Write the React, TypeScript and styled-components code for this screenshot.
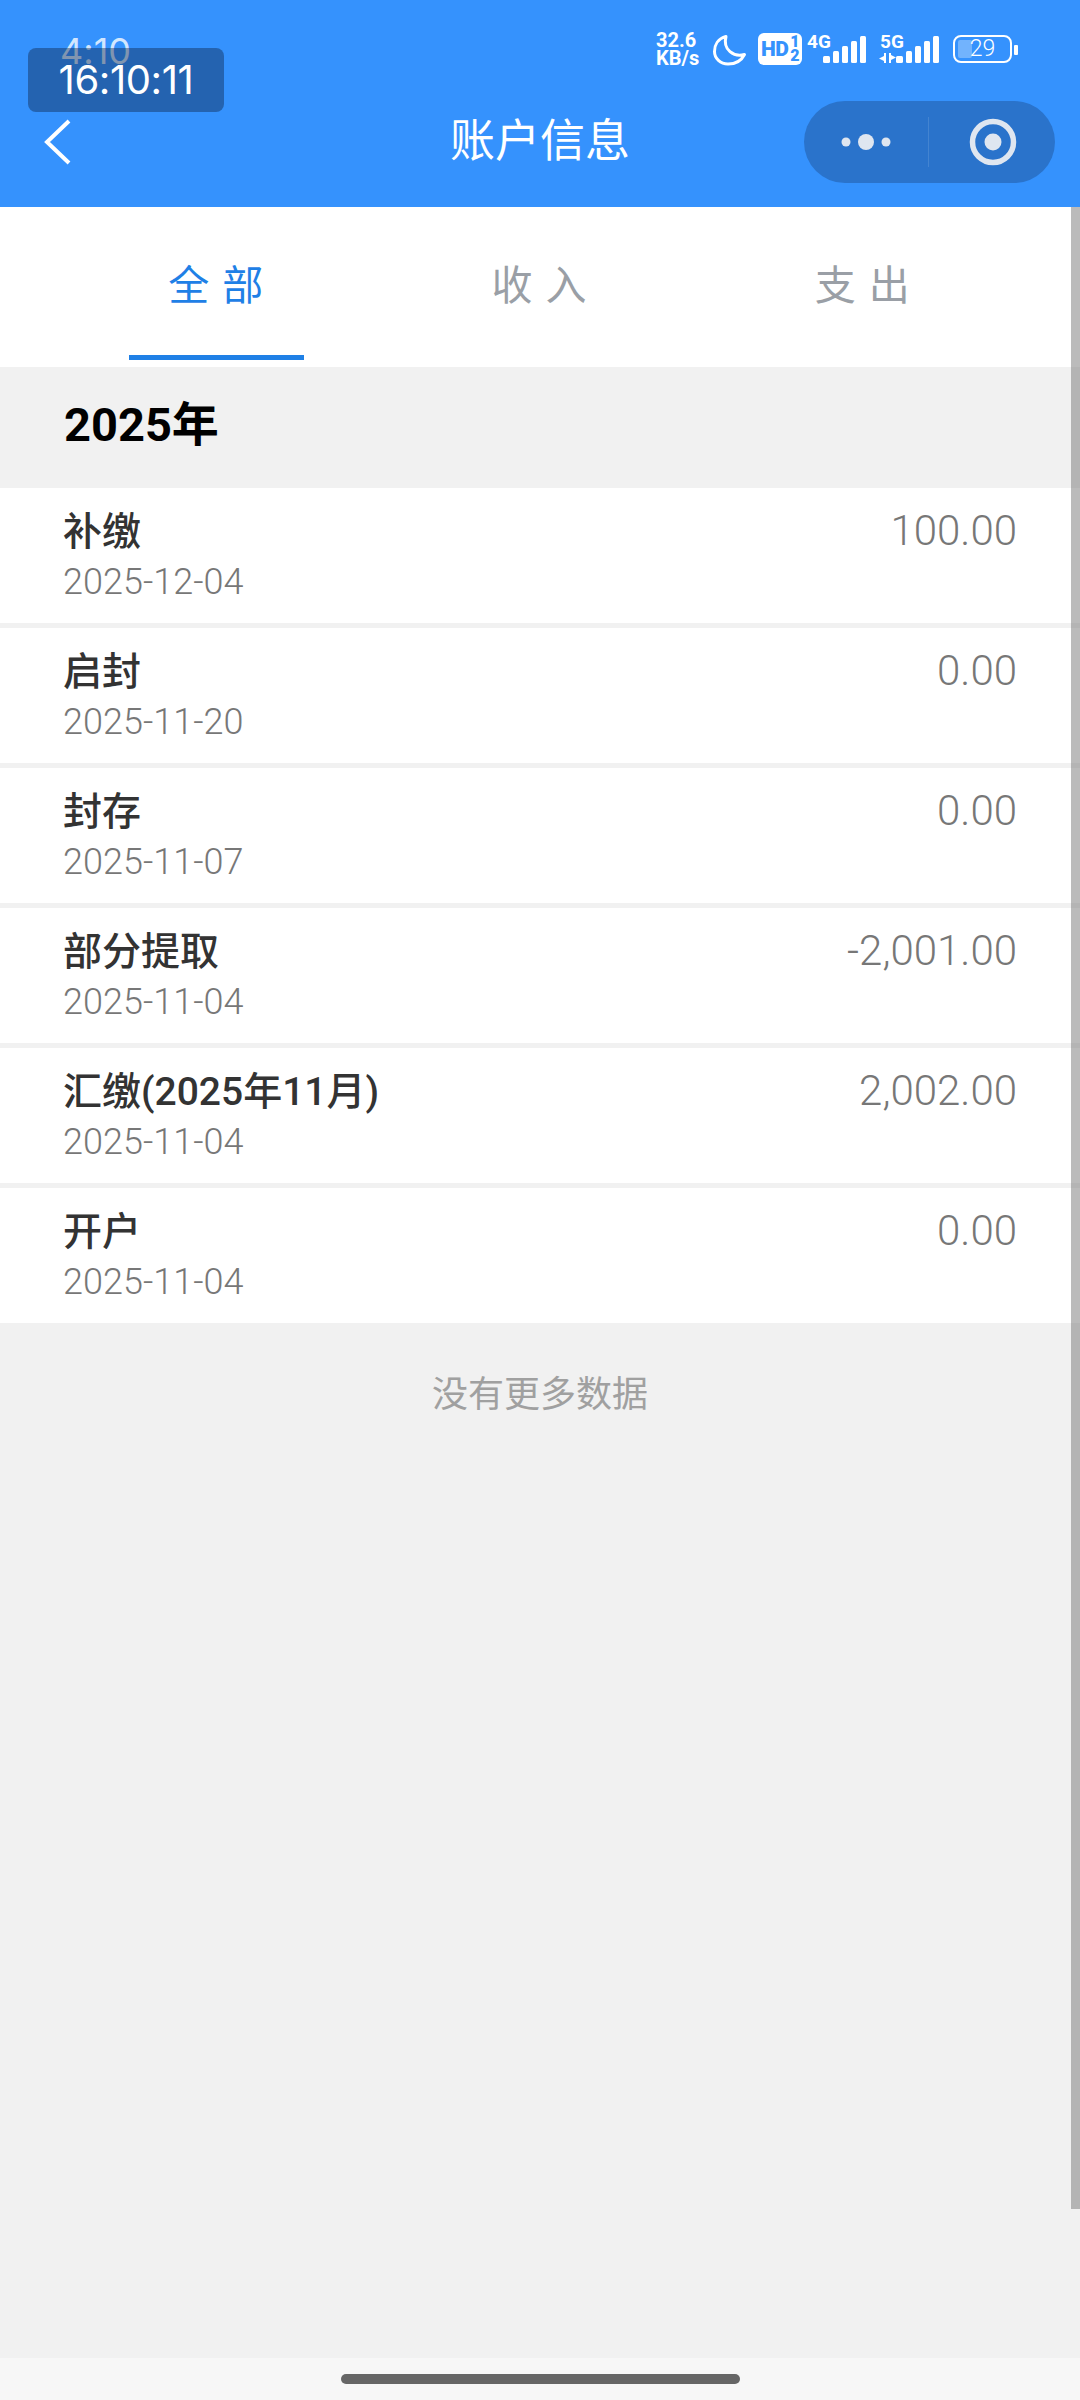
import React from "react";
import styled, { createGlobalStyle } from "styled-components";

const Global = createGlobalStyle`
  html, body { margin: 0; padding: 0; background: #f1f1f1; }
  * { box-sizing: border-box; }
  body { font-family: "Roboto", "Noto Sans CJK SC", sans-serif; }
`;

const Page = styled.div`
  position: relative;
  width: 1080px;
  height: 2400px;
  display: flex;
  flex-direction: column;
  overflow: hidden;
  background: #f1f1f1;
`;

const Header = styled.header`
  height: 207px;
  background: #3592fd;
  display: flex;
  flex-direction: column;
  flex: none;
`;

const StatusBar = styled.div`
  height: 101px;
  padding: 30px 0 0 656px;
  display: flex;
  align-items: flex-start;
  color: #fff;
`;

const Speed = styled.div`
  width: 50px;
  font-size: 20px;
  font-weight: 700;
  line-height: 18px;
  margin-top: 1px;
  white-space: nowrap;
`;

const StatusIcon = styled.svg`
  display: block;
  flex: none;
  overflow: visible;
`;

const MoonSlot = styled.div`
  margin: 5px 0 0 7px;
  width: 33px;
`;

const HdBadge = styled.div`
  margin: 3px 0 0 12px;
  width: 44px;
  height: 32px;
  border-radius: 6px;
  background: #fff;
  color: #3592fd;
  display: flex;
  align-items: center;
  padding-left: 3px;
  font-size: 21px;
  font-weight: 900;
  letter-spacing: -0.6px;
`;

const HdFraction = styled.span`
  display: flex;
  flex-direction: column;
  font-size: 16px;
  line-height: 14px;
  font-weight: 900;
  letter-spacing: 0;
  margin-left: 2px;
`;

const Signal = styled.div<{ $gap: number }>`
  position: relative;
  margin: 3px 0 0 ${(p) => p.$gap}px;
  width: 60px;
  height: 33px;
`;

const NetLabel = styled.span`
  position: absolute;
  left: 1px;
  top: -1px;
  font-size: 19px;
  font-weight: 700;
  line-height: 20px;
`;

const SignalBars = styled.svg`
  position: absolute;
  right: 0;
  top: 3px;
`;

const Arrows = styled.svg`
  position: absolute;
  left: 0;
  top: 20px;
`;

const Battery = styled.div`
  position: relative;
  margin: 5px 0 0 14px;
  width: 59px;
  height: 28px;
  border: 2.5px solid #fff;
  border-radius: 8px;
  display: flex;
  align-items: center;
  justify-content: center;
  font-size: 23px;
  font-weight: 300;
  line-height: 24px;
`;

const BatteryFill = styled.i`
  position: absolute;
  left: 3px;
  top: 3px;
  bottom: 3px;
  width: 14px;
  border-radius: 2px;
  background: rgba(255, 255, 255, 0.3);
`;

const BatteryLevel = styled.span`
  position: relative;
`;

const BatteryNub = styled.i`
  margin: 15px 0 0 2px;
  width: 4px;
  height: 10px;
  border-radius: 1px;
  background: #fff;
`;

const NavBar = styled.div`
  flex: 1;
  display: grid;
  grid-template-columns: 1fr auto 1fr;
  align-items: start;
  padding: 0 25px;
`;

const BackButton = styled.svg`
  margin: 18px 0 0 19px;
  display: block;
`;

const Title = styled.h1`
  margin: 0;
  height: 82px;
  line-height: 82px;
  font-size: 45px;
  font-weight: 400;
  color: #fff;
  text-align: center;
`;

const Capsule = styled.div`
  justify-self: end;
  width: 251px;
  height: 82px;
  border-radius: 41px;
  background: #2a73cb;
  display: flex;
  align-items: center;
`;

const CapsuleSide = styled.div<{ $shift: number }>`
  flex: 1;
  height: 50px;
  display: flex;
  align-items: center;
  justify-content: center;
  padding-left: ${(p) => p.$shift}px;
`;

const CapsuleDivider = styled.div`
  width: 1px;
  height: 50px;
  background: rgba(255, 255, 255, 0.12);
`;

const Tabs = styled.nav`
  height: 160px;
  flex: none;
  background: #fff;
  display: grid;
  grid-template-columns: repeat(3, 1fr);
  padding: 0 56px 0 54px;
`;

const Tab = styled.div<{ $active?: boolean }>`
  position: relative;
  display: flex;
  justify-content: center;
  padding-top: 53px;
  font-size: 41px;
  line-height: 52px;
  letter-spacing: 13px;
  text-indent: 13px;
  color: ${(p) => (p.$active ? "#1f80e6" : "#9a9fa6")};
`;

const TabLine = styled.i`
  position: absolute;
  left: 50%;
  bottom: 7px;
  width: 175px;
  height: 5px;
  margin-left: -86.5px;
  background: #1f80e6;
`;

const YearHeading = styled.h2`
  margin: 0;
  height: 121px;
  flex: none;
  padding: 0 64px 5px;
  display: flex;
  align-items: center;
  font-size: 47px;
  line-height: 60px;
  font-weight: 700;
  color: #000;
`;

const List = styled.ul`
  margin: 0;
  padding: 0;
  list-style: none;
  display: flex;
  flex-direction: column;
  gap: 5px;
  flex: none;
`;

const Row = styled.li`
  height: 135px;
  background: #fff;
  padding: 20px 63px 0 63px;
  display: flex;
  justify-content: space-between;
  align-items: flex-start;
`;

const RowText = styled.div`
  display: flex;
  flex-direction: column;
`;

const RowTitle = styled.div`
  font-size: 39px;
  line-height: 48px;
  font-weight: 500;
  color: #333;
`;

const RowDate = styled.div`
  margin-top: 5px;
  font-size: 36px;
  line-height: 42px;
  font-weight: 300;
  color: #777;
`;

const Amount = styled.div`
  margin-top: -1px;
  font-size: 42px;
  line-height: 48px;
  font-weight: 300;
  color: #777;
`;

const NoMore = styled.div`
  margin-top: 48px;
  text-align: center;
  font-size: 36px;
  line-height: 48px;
  color: #a0a0a0;
  flex: none;
`;

const Spacer = styled.div`
  flex: 1;
`;

const HomeArea = styled.div`
  height: 42px;
  flex: none;
  background: #f7f7f7;
  display: flex;
  justify-content: center;
  padding-top: 16px;
`;

const HomeBar = styled.i`
  width: 399px;
  height: 10px;
  border-radius: 5px;
  background: #666;
`;

const ClockOverlay = styled.div`
  position: absolute;
  left: 28px;
  top: 48px;
  width: 196px;
  height: 64px;
  border-radius: 8px;
  background: rgba(15, 35, 70, 0.42);
  color: #fff;
  font-family: "Inter", sans-serif;
  font-feature-settings: "calt" 0;
  font-size: 40px;
  line-height: 64px;
  font-weight: 400;
  letter-spacing: -0.4px;
  text-align: center;
`;

const ClockBehind = styled.div`
  position: absolute;
  left: 60px;
  top: 29px;
  font-family: "Inter", sans-serif;
  font-feature-settings: "calt" 0;
  font-size: 36px;
  line-height: 44px;
  color: rgba(255, 255, 255, 0.78);
`;

const ScrollThumb = styled.div`
  position: absolute;
  right: 0;
  top: 207px;
  width: 9px;
  height: 2002px;
  background: rgba(120, 120, 120, 0.5);
`;

const rows = [
  { title: "补缴", date: "2025-12-04", amount: "100.00" },
  { title: "启封", date: "2025-11-20", amount: "0.00" },
  { title: "封存", date: "2025-11-07", amount: "0.00" },
  { title: "部分提取", date: "2025-11-04", amount: "-2,001.00" },
  { title: "汇缴(2025年11月)", date: "2025-11-04", amount: "2,002.00" },
  { title: "开户", date: "2025-11-04", amount: "0.00" },
];

const Bars = () => (
  <SignalBars width="43" height="27" viewBox="0 0 43 27" fill="#fff">
    <rect x="0" y="20" width="7" height="7" rx="1.5" />
    <rect x="10" y="15" width="6" height="12" rx="1.5" />
    <rect x="19" y="10" width="6" height="17" rx="1.5" />
    <rect x="28" y="5" width="6" height="22" rx="1.5" />
    <rect x="37" y="0" width="6" height="27" rx="1.5" />
  </SignalBars>
);

export default function App() {
  return (
    <Page>
      <Global />
      <Header>
        <StatusBar>
          <Speed>
            32.6
            <br />
            KB/s
          </Speed>
          <MoonSlot>
            <StatusIcon width="33" height="30" viewBox="0 0 33 30" fill="none">
              <path
                d="M13 1.5C5 3.5 1.5 10 1.5 16.5C1.5 23.5 7.5 29 15 29C22.5 29 28.5 25.5 31.5 19.5C21 22.5 9.5 15 13 1.5Z"
                stroke="#fff"
                strokeWidth="3"
                strokeLinejoin="round"
              />
            </StatusIcon>
          </MoonSlot>
          <HdBadge>
            HD
            <HdFraction>
              <span>1</span>
              <span>2</span>
            </HdFraction>
          </HdBadge>
          <Signal $gap={4}>
            <NetLabel>4G</NetLabel>
            <Bars />
          </Signal>
          <Signal $gap={13}>
            <NetLabel>5G</NetLabel>
            <Arrows width="17" height="10" viewBox="0 0 17 10" fill="#fff">
              <path d="M5 0h2v10H5V8L0 5.5 5 3zM10 0h2v2l5 2.5L12 7v3h-2z" />
            </Arrows>
            <Bars />
          </Signal>
          <Battery>
            <BatteryFill />
            <BatteryLevel>29</BatteryLevel>
          </Battery>
          <BatteryNub />
        </StatusBar>
        <NavBar>
          <BackButton width="28" height="46" viewBox="0 0 28 46" fill="none">
            <path d="M25 2 L3 23 L25 44" stroke="#fff" strokeWidth="4" />
          </BackButton>
          <Title>账户信息</Title>
          <Capsule>
            <CapsuleSide $shift={0}>
              <StatusIcon width="50" height="18" viewBox="0 0 50 18" fill="#dfe6f0">
                <circle cx="5" cy="9" r="4.5" />
                <circle cx="25" cy="9" r="8" />
                <circle cx="45" cy="9" r="4.5" />
              </StatusIcon>
            </CapsuleSide>
            <CapsuleDivider />
            <CapsuleSide $shift={3}>
              <StatusIcon width="48" height="48" viewBox="0 0 48 48" fill="none">
                <circle cx="24" cy="24" r="20.5" stroke="#dfe6f0" strokeWidth="5.5" />
                <circle cx="24" cy="24" r="8.5" fill="#dfe6f0" />
              </StatusIcon>
            </CapsuleSide>
          </Capsule>
        </NavBar>
      </Header>
      <Tabs>
        <Tab $active>
          全部
          <TabLine />
        </Tab>
        <Tab>收入</Tab>
        <Tab>支出</Tab>
      </Tabs>
      <YearHeading>2025年</YearHeading>
      <List>
        {rows.map((r) => (
          <Row key={r.title}>
            <RowText>
              <RowTitle>{r.title}</RowTitle>
              <RowDate>{r.date}</RowDate>
            </RowText>
            <Amount>{r.amount}</Amount>
          </Row>
        ))}
      </List>
      <NoMore>没有更多数据</NoMore>
      <Spacer />
      <HomeArea>
        <HomeBar />
      </HomeArea>
      <ClockBehind>4:10</ClockBehind>
      <ClockOverlay>16:10:11</ClockOverlay>
      <ScrollThumb />
    </Page>
  );
}
